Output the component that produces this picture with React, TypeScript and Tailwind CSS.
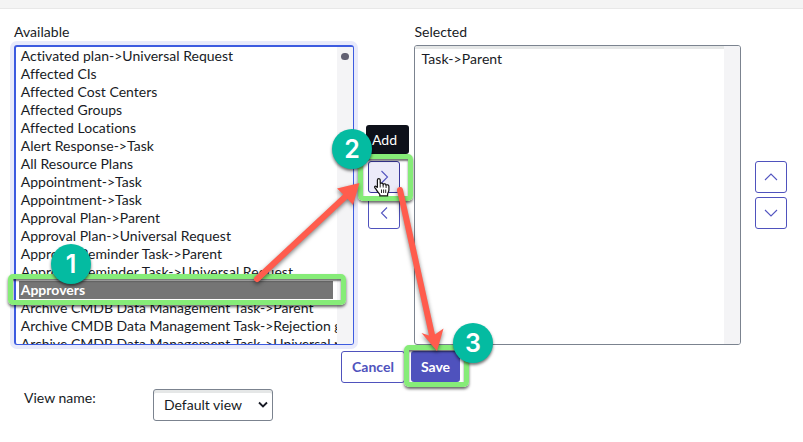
import React from 'react';

const available = [
  'Activated plan->Universal Request',
  'Affected CIs',
  'Affected Cost Centers',
  'Affected Groups',
  'Affected Locations',
  'Alert Response->Task',
  'All Resource Plans',
  'Appointment->Task',
  'Appointment->Task',
  'Approval Plan->Parent',
  'Approval Plan->Universal Request',
  'Approval Reminder Task->Parent',
  'Approval Reminder Task->Universal Request',
  'Approvers',
  'Archive CMDB Data Management Task->Parent',
  'Archive CMDB Data Management Task->Rejection goal',
  'Archive CMDB Data Management Task->Universal request',
];

function optionStyle(i: number) {
  if (i === 13) return 'bg-[#757575] font-bold text-white';
  if (i > 13) return 'tracking-[0.01px]';
  return i < 9 ? 'tracking-[0.02px]' : 'tracking-[0.045px]';
}

function IconButton({ d, active = false }: { d: string; active?: boolean }) {
  return (
    <button
      className={`flex size-8 items-center justify-center rounded-[3px] border ${
        active ? 'border-[#3a379c] bg-[#ecebf9]' : 'border-[#4f52bd] bg-white'
      }`}
    >
      <svg width="14" height="14" viewBox="0 0 14 14" fill="none" stroke="#5355c0" strokeWidth="1.1">
        <path d={d} />
      </svg>
    </button>
  );
}

function Badge({ n, className }: { n: number; className: string }) {
  return (
    <div
      className={`absolute flex size-10 items-center justify-center rounded-full bg-[#04bba1] pt-px font-['Inter',sans-serif] text-[25px] leading-none font-semibold text-white shadow-[0_2px_3px_rgba(0,0,0,0.55)] ${className}`}
    >
      {n}
    </div>
  );
}

function Highlight({ className }: { className: string }) {
  return (
    <div
      className={`absolute rounded-[5px] border-5 border-[#86ec78] shadow-[0_2px_3px_rgba(0,0,0,0.6),inset_0_2px_2px_rgba(0,0,0,0.55)] ${className}`}
    />
  );
}

export default function App() {
  return (
    <div className="relative h-[442px] w-[803px] overflow-hidden bg-white font-[Lato,sans-serif] text-[14px] leading-[18px] text-[#181b25]">
      <div className="h-[9px] border-b border-[#e8e8e8] bg-[#f4f4f4]" />

      <div className="flex pt-[14px] pl-[14px]">
        <div className="w-[340px]">
          <div className="h-[22px] tracking-[0.04px]">Available</div>
          <div className="flex h-[300px] overflow-hidden rounded-[3px] border border-t-2 border-l-2 border-[#3d5be0] shadow-[0_0_0_4px_#e8eafb]">
            <ul className="w-[321px] overflow-hidden pl-[3px]">
              {available.map((name, i) => (
                <li key={i} className={`h-[18px] w-[314px] pl-[1.7px] whitespace-nowrap ${optionStyle(i)}`}>
                  {name}
                </li>
              ))}
            </ul>
            <div className="w-4 bg-[#f4f4f6] pt-[6px] pl-1">
              <div className="h-[7px] w-2 rounded-full bg-[#626173]" />
            </div>
          </div>
        </div>

        <div className="ml-[14px] flex w-8 flex-col gap-1 pt-[138px]">
          <IconButton d="M4.5 1 10.5 7 4.5 13" active />
          <IconButton d="M10 1.5 4.5 7 10 12.5" />
        </div>

        <div className="ml-[14px] w-[327px]">
          <div className="h-[22px] pl-[0.5px]">Selected</div>
          <div className="flex h-[300px] overflow-hidden rounded-[3px] border border-[#7b838f]">
            <div className="grow border-t-3 border-[#e5e7e7] pt-px pl-[6.6px] tracking-[0.06px]">Task-&gt;Parent</div>
            <div className="w-4 bg-[#f4f4f6]" />
          </div>
        </div>

        <div className="ml-[14px] flex w-8 flex-col gap-1 pt-[138px]">
          <IconButton d="M1 10 7 4 13 10" />
          <IconButton d="M1 4 7 10 13 4" />
        </div>
      </div>

      <div className="flex gap-[6px] pt-[6px] pl-[341px] font-bold">
        <button className="h-8 w-16 rounded-[3px] border border-[#4f52bd] text-[#4f52bd]">Cancel</button>
        <button className="h-[31px] w-[49px] rounded-[3px] bg-[#4f52bd] text-white">Save</button>
      </div>

      <div className="flex pt-[6px] pl-6">
        <label className="w-[129px]">View name:</label>
        <div className="flex h-8 w-[120px] items-center justify-between rounded-[3px] border border-[#7b838f] pr-1 pl-[10px] shadow-[inset_0_3px_0_#e5e7e7]">
          <span>Default view</span>
          <svg width="10" height="8" viewBox="0 0 10 8" fill="none" stroke="#181b25" strokeWidth="1.8">
            <path d="M1 1.5 5 5.5 9 1.5" />
          </svg>
        </div>
      </div>

      <div className="absolute top-[125px] left-[366px] flex h-[29px] w-[43px] items-center rounded-[3px] bg-[#0e111a] pl-[6px] text-white">
        Add
      </div>

      <Highlight className="top-[274px] left-[8px] h-[31px] w-[338px]" />
      <Highlight className="top-[154px] left-[358px] h-[47px] w-[55px]" />
      <Highlight className="top-[345px] left-[404px] h-[42px] w-[65px]" />

      <svg className="absolute top-[178px] left-[374px]" width="17" height="19" viewBox="0 0 17 19">
        <path
          d="M3.400 9.800V2C3.400 .2 6.200 .2 6.200 2V5.800C6.700 4.700 9 4.900 9.200 6.300C9.800 5.400 11.900 5.600 12.100 7.100C12.900 6.400 14.900 6.900 14.900 8.400V12C14.900 14 13.600 14.600 13.600 16.500V17.800H5.800V16.300C4.300 14.800 3.100 13.300 2.100 11.400C1.600 10.400 .6 9.900 .6 8.900C.8 7.600 2.600 8.100 3.400 9.800Z"
          fill="#fff"
          stroke="#111"
          strokeWidth="1.200"
        />
        <path d="M6.200 6v3.500M9.200 6.500v3M12.100 7.300v2.700M7.500 11.500v3.500M9.600 11.500v3.500M11.700 11.500v3.500" stroke="#111" strokeWidth=".9" />
      </svg>

      <svg
        className="absolute top-0 left-0 drop-shadow-[0_2px_2px_rgba(0,0,0,0.5)]"
        width="803"
        height="442"
        viewBox="0 0 803 442"
        fill="#ff5c4d"
      >
        <path d="M257 279 346 196M400 190 432 335" stroke="#ff5c4d" strokeWidth="6" strokeLinecap="round" />
        <path d="M359.500 183 337 188.500 345 196 353 205Z" />
        <path d="M437 351 421.500 333 432 336.500 443.500 328.500Z" />
      </svg>

      <Badge n={1} className="top-[244px] left-[51px]" />
      <Badge n={2} className="top-[129px] left-[332px]" />
      <Badge n={3} className="top-[323px] left-[453px]" />
    </div>
  );
}
